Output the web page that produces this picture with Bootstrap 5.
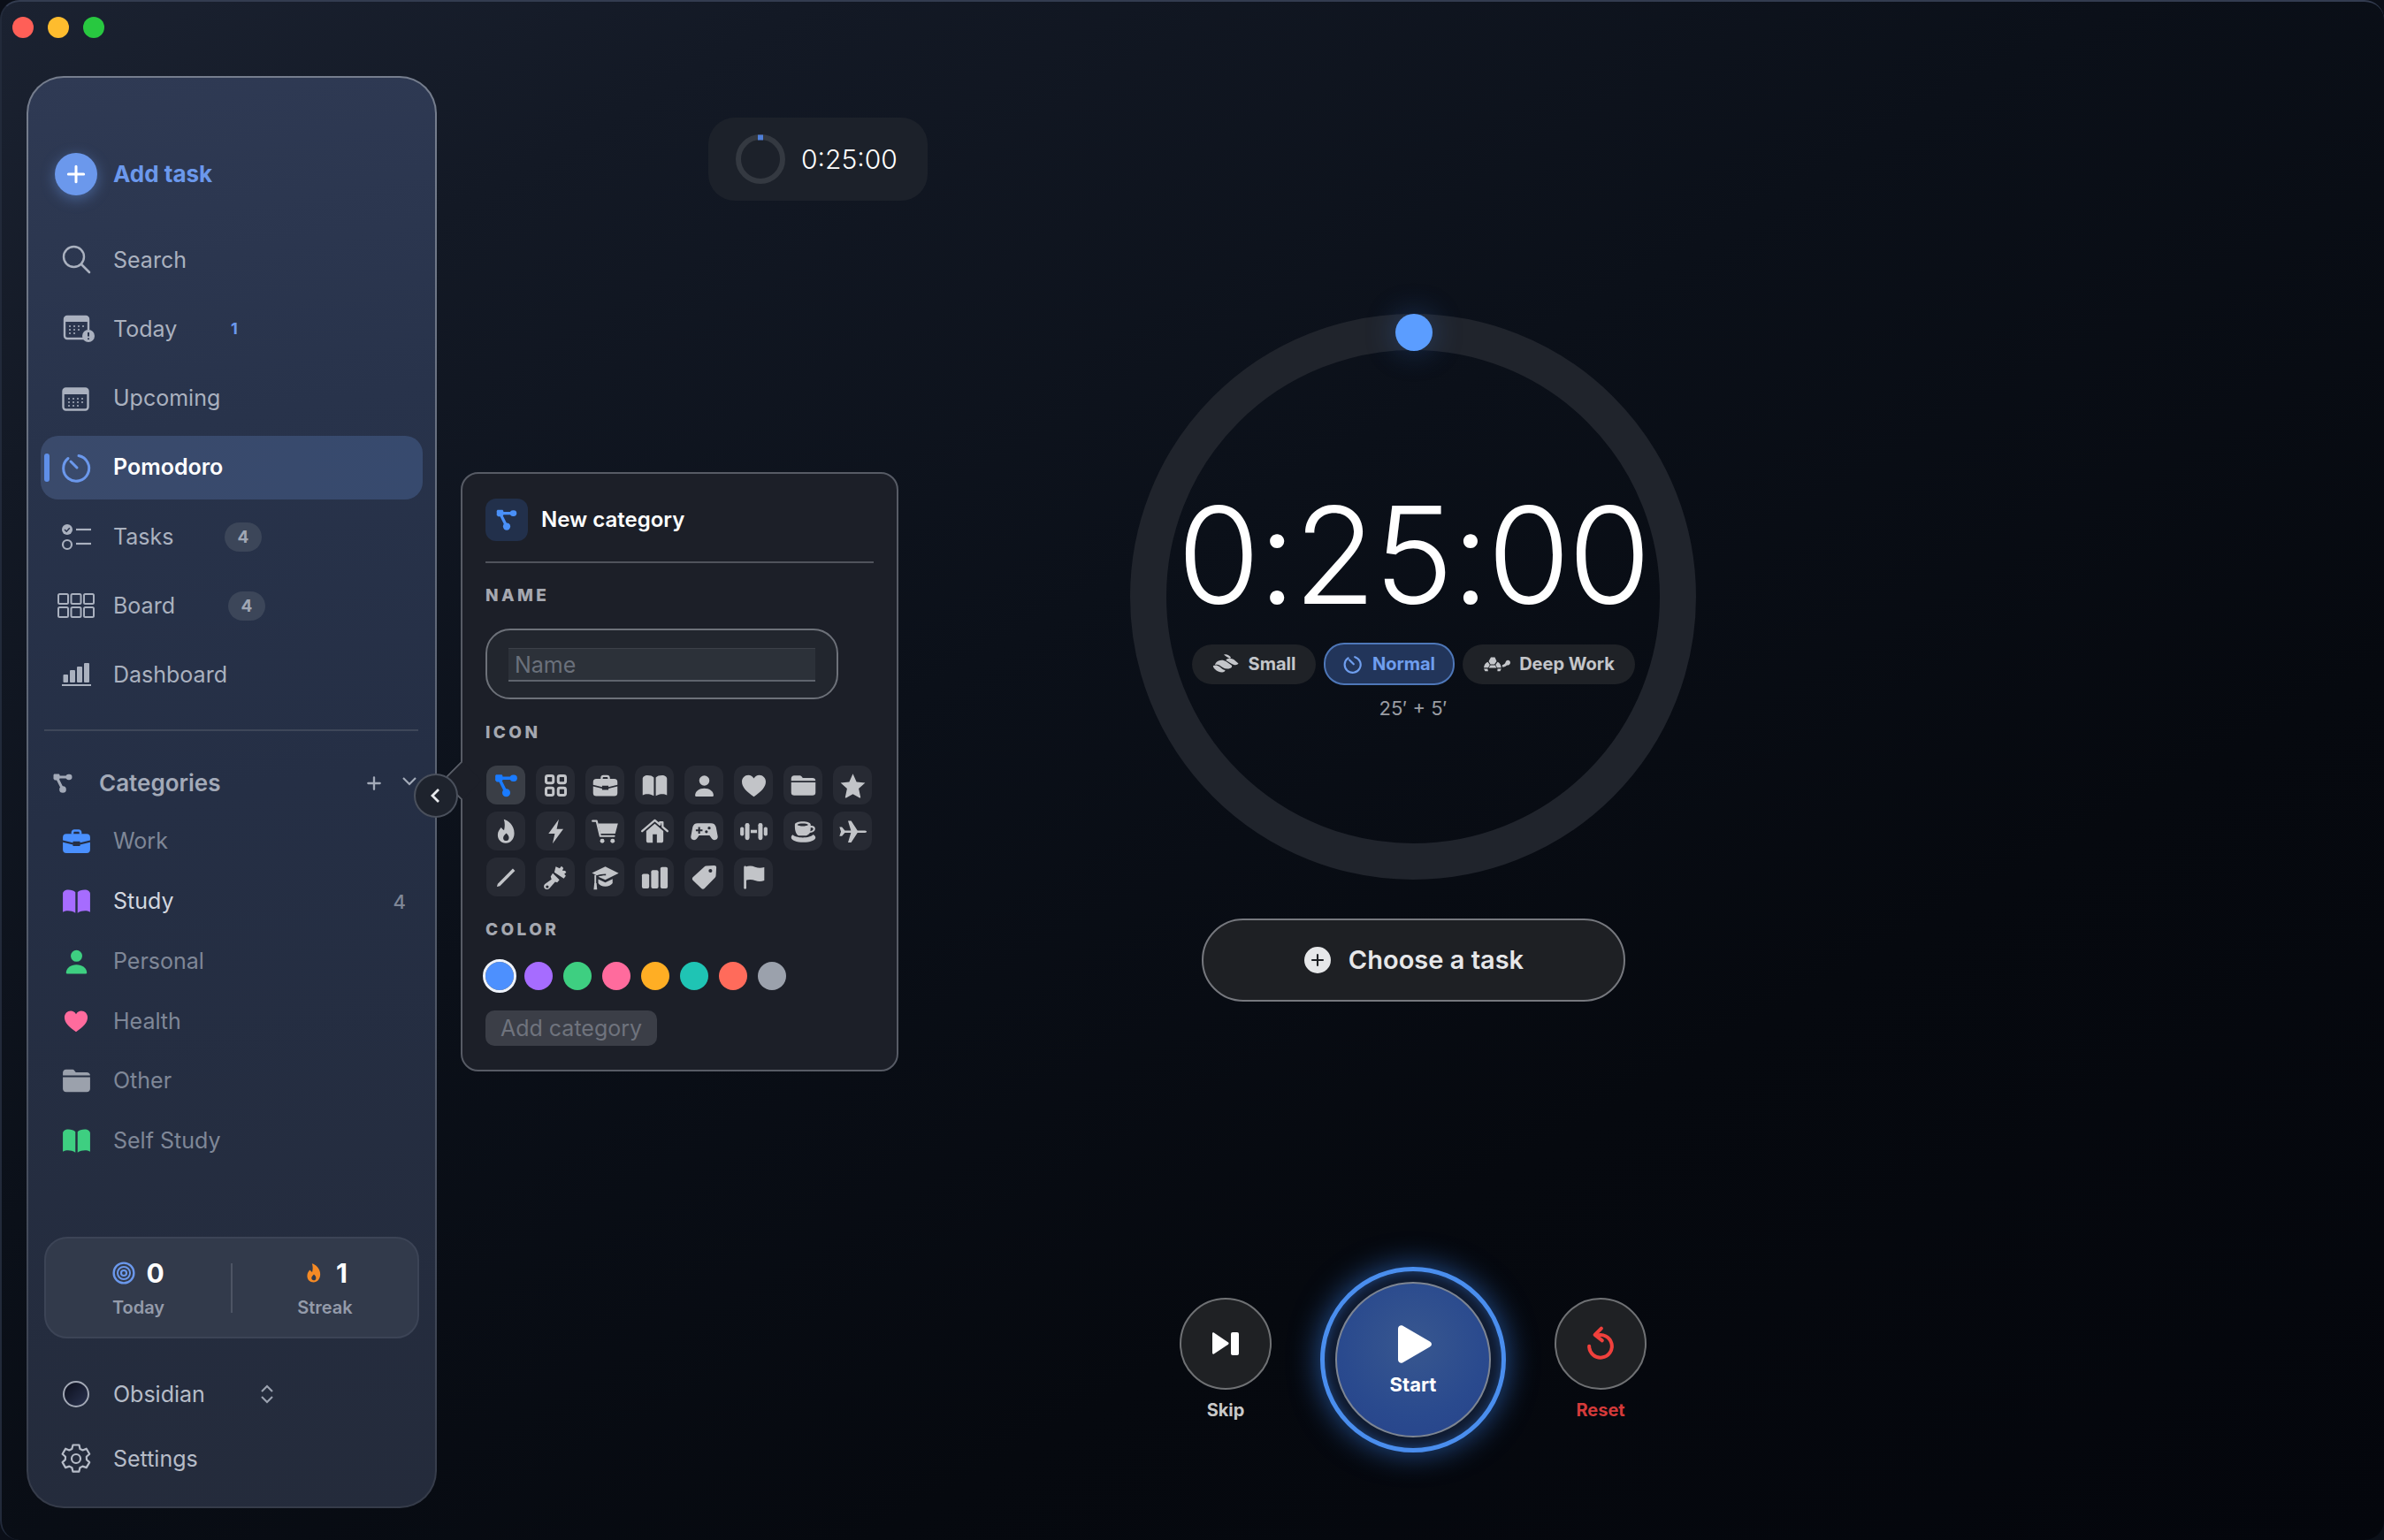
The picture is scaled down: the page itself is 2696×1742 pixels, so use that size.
<!DOCTYPE html>
<html lang="en">
<head>
<meta charset="UTF-8">
<title>Pomodoro</title>
<link href="https://cdn.jsdelivr.net/npm/bootstrap@5.3.3/dist/css/bootstrap.min.css" rel="stylesheet">
<style>
    html, body { margin: 0; background: #0b0f18; }
    body { width: 2696px; height: 1742px; overflow: hidden; font-family: Inter, "Noto Sans", sans-serif; }
    .app-window {
        position: relative; width: 2696px; height: 1742px; border-radius: 22px; overflow: hidden;
        border-top: 2px solid #333c50; border-left: 2px solid #222a3a;
        background: linear-gradient(150deg, #1b2231 0, #131925 16%, #0b1019 42%, #06090f 70%, #04060c 100%);
    }
    .traffic { position: absolute; left: 12px; top: 17px; gap: 16px; }
    .traffic i { width: 24px; height: 24px; border-radius: 50%; display: block; }

    /* sidebar */
    .side-panel {
        width: 464px; height: 1620px; margin: 84px 0 0 28px; flex: none; border-radius: 42px; border: 2px solid transparent;
        background: linear-gradient(170deg, #2f3a54 0, #28334b 25%, #252f45 50%, #242b3b 100%) padding-box,
                    linear-gradient(180deg, #767e8e 0, #5d6574 45%, #444b5a 80%, #353b49 100%) border-box;
        padding: 73px 14px 23px;
    }
    .side-row { height: 72px; border-radius: 20px; padding-left: 16px; gap: 18px; position: relative; color: #aab1bf; font-size: 25px; line-height: 1; }
    .side-row svg { width: 48px; height: 48px; flex: none; }
    .side-row.is-active { background: linear-gradient(90deg, #3a4a6b, #374a6e); color: #fff; font-weight: 600; }
    .side-row.is-active::before { content: ""; position: absolute; left: 4px; top: 20px; width: 6px; height: 32px; border-radius: 3px; background: #5f8fe8; }
    .side-row.is-add { color: #6b98ec; font-weight: 700; font-size: 26px; margin-bottom: 25px; }
    .add-dot { width: 48px; height: 48px; border-radius: 50%; background: #6b98ec; box-shadow: 0 4px 16px rgba(107,152,236,.45); color: #fff; flex: none; }
    .side-row.is-add .add-dot svg { width: 26px; height: 26px; }
    .nav-stack { gap: 6.3px; }
    .today-count { position: absolute; left: 215px; color: #6b98ec; font-weight: 700; font-size: 18px; }
    .pill-count { position: absolute; height: 33px; width: 42px; border-radius: 17px; background: #3c4659; color: #a0a7b5; font-size: 19px; font-weight: 700; }
    .side-rule { height: 2px; background: #3e4759; margin: 25px 5px 0 4px; }
    .cat-head { height: 40px; margin-top: 39px; padding-left: 11px; color: #a3aab8; font-size: 26px; font-weight: 600; position: relative; }
    .cat-head .cat-icon { width: 28px; height: 28px; margin-right: 27px; flex: none; }
    .cat-head .tool { position: absolute; width: 20px; height: 20px; color: #a3aab8; }
    .cat-stack { gap: 5.8px; margin-top: 15px; }
    .cat-row { height: 62px; color: #7f8797; }
    .cat-row.is-live { color: #d3d7df; }
    .cat-row svg { width: 37px; height: 37px; margin: 0 5.5px; }
    .cat-row svg.is-small { width: 32px; height: 32px; margin: 0 8px; }
    .cat-count { position: absolute; right: 19px; color: #7f8797; font-size: 22px; font-weight: 500; }
    .stat-box { height: 115px; margin: 0 4px 32px 4px; border-radius: 26px; background: #323a4b; border: 2px solid #3c4456; }
    .stat-cell { flex: 1 1 0; }
    .stat-num { color: #fff; font-size: 30px; font-weight: 700; line-height: 1; gap: 12px; margin-top: 1px; }
    .stat-num svg { width: 26px; height: 26px; }
    .stat-cap { color: #949baa; font-size: 20px; font-weight: 600; margin-top: 14px; line-height: 1; }
    .stat-line { width: 2px; height: 56px; background: #4d5464; }
    .foot-stack { gap: 11px; }
    .foot-row { height: 62px; color: #b6bcc8; }
    .theme-dot { width: 30px; height: 30px; margin: 0 9px; border-radius: 50%; border: 2px solid #a2a8b5; background: linear-gradient(135deg, #0c0f1c, #2a3350); flex: none; }
    .foot-row .updown { position: absolute; left: 244px; width: 24px; height: 24px; color: #9aa1af; }

    /* collapse handle */
    .collapse-handle { position: absolute; left: 466px; top: 873px; width: 50px; height: 50px; border-radius: 50%; background: #1e232d; border: 2px solid #4a505c; color: #e8eaee; z-index: 5; }
    .collapse-handle svg { width: 24px; height: 24px; }

    /* popover */
    .cat-popover {
        position: absolute; left: 519px; top: 532px; width: 495px; height: 678px; z-index: 4; border-radius: 20px; padding: 28px 26px 0;
        background: #1c1f28; border: 2px solid #575b65;
    }
    .cat-popover::before { content: ""; position: absolute; left: -17px; top: 331px; width: 32px; height: 32px; transform: rotate(45deg); background: #1c1f28; border-left: 2px solid #575b65; border-bottom: 2px solid #575b65; border-radius: 0 0 0 8px; }
    .pop-tile { width: 48px; height: 48px; border-radius: 12px; background: #22304b; color: #4a90f8; flex: none; }
    .pop-tile svg { width: 30px; height: 30px; }
    .pop-title { color: #fff; font-size: 24px; font-weight: 600; margin-left: 15px; }
    .pop-rule { height: 2px; background: #50535c; margin-top: 23px; }
    .pop-label { color: #a5a8b0; font-size: 19px; font-weight: 800; letter-spacing: 3.4px; line-height: 1; height: 20px; }
    .name-wrap { width: 399px; height: 80px; border-radius: 28px; border: 2px solid #6d7179; background: #22262e; padding: 20px 24px; }
    .name-input { display: block; width: 100%; height: 38px; background: #2c3139; border: 0; border-bottom: 2px solid #5f646d; border-top: 1px solid #3c4048; padding: 0 7px; color: #fff; font-size: 25px; border-radius: 0; outline: 0; }
    .name-input::placeholder { color: #6a707b; opacity: 1; }
    .icon-grid { display: grid; grid-template-columns: repeat(8, 44px); grid-auto-rows: 44px; gap: 8px 12px; margin: 0 0 0 1px; }
    .icon-tile { background: #272a33; color: #c2c4c8; border-radius: 12px; }
    .icon-tile svg { width: 33px; height: 33px; }
    .icon-tile.is-picked { background: #3a3e46; color: #1a7bff; }
    .swatch-row { gap: 12px; }
    .swatch { width: 32px; height: 32px; border-radius: 50%; display: block; }
    .swatch.is-picked { outline: 3px solid #eef2fa; outline-offset: 0; }
    .add-cat { height: 40px; width: 194px; padding: 0; border-radius: 10px; background: #3b3e47; color: #6f737d; border: 0; font-size: 25px; line-height: 1; }

    /* main */
    .main-pane { flex: 1 1 0; padding: 131px 0 0 6px; }
    .mini-timer { align-self: flex-start; margin-left: 301px; width: 248px; height: 94px; border-radius: 30px; background: #1c212a; padding-left: 31px; gap: 18px; color: #fff; font-size: 30px; font-weight: 300; }
    .mini-ring { width: 56px; height: 56px; flex: none; }
    .timer-ring { width: 640px; height: 640px; margin-top: 128px; border-radius: 50%; border: 41px solid #20242c; position: relative; padding-top: 156px; flex: none; }
    .ring-handle { position: absolute; width: 42px; height: 42px; border-radius: 50%; background: #5b9dff; top: -41px; left: 259px; box-shadow: 0 0 34px rgba(60,120,220,.35); }
    .big-time { color: #fff; font-size: 152px; font-weight: 300; line-height: 1; letter-spacing: -2.500px; height: 152px; white-space: nowrap; }
    .mode-row { gap: 9px; margin-top: 23px; height: 48px; flex: none; }
    .mode-pill { height: 45px; border-radius: 23px; background: #1f2227; color: #c4c6ca; font-size: 20px; font-weight: 700; gap: 10px; border: 0; padding: 0; }
    .mode-pill svg { width: 32px; height: 24px; }
    .mode-pill.is-on { height: 48px; background: #22355a; color: #6f9eee; border: 2px solid #4e77b8; }
    .mode-pill.is-on svg { width: 24px; height: 24px; }
    .mode-note { color: #9a9da3; font-size: 22px; margin-top: 15px; line-height: 1; }
    .choose-btn { width: 479px; height: 94px; margin-top: 44px; border-radius: 47px; background: #1e2024; border: 2px solid #76787e; color: #e6e7e9; font-size: 29px; font-weight: 600; gap: 20px; padding: 0 0 0 2px; flex: none; }
    .choose-dot { width: 30px; height: 30px; border-radius: 50%; background: #e6e7e9; color: #1e2024; flex: none; }
    .choose-dot svg { width: 18px; height: 18px; }
    .ctrl-row { margin-top: 300px; gap: 55px; }
    .ctrl-col { width: 104px; padding-top: 35px; }
    .ctrl-btn { width: 104px; height: 104px; padding: 0; border-radius: 50%; background: #1f2124; border: 2px solid #6f7174; flex: none; }
    .ctrl-btn svg { width: 44px; height: 44px; }
    .ctrl-cap { font-size: 20px; font-weight: 700; margin-top: 13px; line-height: 1; }
    .start-ring { width: 210px; height: 210px; border-radius: 50%; border: 5px solid #4a8eee; padding: 12px; background: #101b30; box-shadow: 0 0 34px rgba(58,132,240,.6), inset 0 0 12px rgba(58,132,240,.4); }
    .start-btn { width: 100%; height: 100%; padding: 0; border-radius: 50%; border: 2px solid #7d8592; background: radial-gradient(circle at 50% 40%, #38578f 0, #2a4a8e 60%, #26428a 100%); color: #fff; font-size: 22px; font-weight: 700; gap: 13px; line-height: 1; }
    .start-btn svg { width: 38px; height: 43px; margin-left: 3px; }
</style>
</head>
<body>
<svg width="0" height="0" class="position-absolute">
    <defs>
        <symbol id="i-net" viewBox="0 0 24 24"><path d="M6 6H18M6 6L12 18" fill="none" stroke="currentColor" stroke-width="2.600"/><path d="M3 4.200c0-.7.500-1.200 1.200-1.200h3.600c.7 0 1.200.5 1.200 1.200L9 7.800 7.800 9H4.200L3 7.800z" fill="currentColor"/><rect x="15" y="3.300" width="6" height="5.400" rx="2.700" fill="currentColor"/><circle cx="12" cy="18" r="3.300" fill="currentColor"/></symbol>
        <symbol id="i-grid4" viewBox="0 0 24 24"><g fill="none" stroke="currentColor" stroke-width="2.200"><rect x="4" y="4" width="6" height="6" rx="1.400"/><rect x="14" y="4" width="6" height="6" rx="1.400"/><rect x="4" y="14" width="6" height="6" rx="1.400"/><rect x="14" y="14" width="6" height="6" rx="1.400"/></g></symbol>
        <symbol id="i-case" viewBox="0 0 24 24"><path d="M8.200 7V5.600C8.200 4.200 9.200 3.400 10.400 3.400h3.200c1.200 0 2.200.8 2.200 2.200V7h-1.700V5.800c0-.5-.3-.8-.8-.8h-2.600c-.5 0-.8.3-.8.8V7z" fill="currentColor"/><path d="M4.600 6.600h14.800A2.600 2.600 0 0 1 22 9.200v2.200l-7.400 1.800v-1h-5.200v1L2 11.400V9.200a2.600 2.600 0 0 1 2.600-2.600z" fill="currentColor"/><path d="M2 12.800l7.400 1.800v1h5.200v-1l7.400-1.800v5.400a2.600 2.600 0 0 1-2.600 2.600H4.600A2.600 2.600 0 0 1 2 18.200z" fill="currentColor"/></symbol>
        <symbol id="i-book" viewBox="0 0 24 24"><path d="M11.200 5.400v15.200c-1.600-1.200-3.600-1.600-5.400-1.600-1.400 0-2.500.3-3.800 1V6.400C2 5 3.600 3.600 6 3.600c2.200 0 4.200.6 5.200 1.800z" fill="currentColor"/><path d="M12.800 5.400v15.200c1.600-1.200 3.600-1.600 5.400-1.600 1.400 0 2.500.3 3.800 1V6.400C22 5 20.400 3.600 18 3.600c-2.200 0-4.200.6-5.200 1.800z" fill="currentColor"/></symbol>
        <symbol id="i-person" viewBox="0 0 24 24"><circle cx="12" cy="8" r="4.200" fill="currentColor"/><path d="M4.400 20.400c0-3.600 3.400-6 7.600-6s7.600 2.400 7.600 6c0 .4-.3.6-.7.6H5.100c-.4 0-.7-.2-.7-.6z" fill="currentColor"/></symbol>
        <symbol id="i-heart" viewBox="0 0 24 24"><path d="M12 21.200C5.600 16.800 2.200 13.200 2.200 8.900 2.200 5.800 4.600 3.400 7.500 3.400c1.900 0 3.500 1 4.500 2.700 1-1.700 2.600-2.700 4.500-2.700 2.900 0 5.300 2.400 5.300 5.500 0 4.300-3.400 7.900-9.800 12.300z" fill="currentColor"/></symbol>
        <symbol id="i-folder" viewBox="0 0 24 24"><path d="M2 6.200C2 4.800 3 3.800 4.400 3.800h4.200c.9 0 1.500.3 2.100 1l.8 1H19.500c1.500 0 2.500.9 2.500 2.300H2z" fill="currentColor"/><path d="M2 9.400h20v8.400c0 1.500-1 2.400-2.500 2.400h-15C3 20.200 2 19.300 2 17.800z" fill="currentColor"/></symbol>
        <symbol id="i-star" viewBox="0 0 24 24"><path d="M12 2.400l3 6.600 7.100.8-5.300 4.800 1.500 7c.1.500-.4.800-.8.600L12 19l-5.500 3.200c-.4.200-.9-.1-.8-.6l1.500-7-5.300-4.800L9 9z" fill="currentColor"/></symbol>
        <symbol id="i-flame" viewBox="0 0 24 24"><path fill-rule="evenodd" d="M10 2c3.800 1 8.600 5 8.600 11.400 0 4.800-3 8.200-7 8.200-3.800 0-6.600-2.800-6.600-6.700 0-2.700 1.400-4.500 2.800-6.100.9 1.100 1.500 1.800 2.400 2.300C11 8 11 5 10 2zm2 11.400c-1.600 1.500-2.500 2.700-2.500 4 0 1.300 1 2.300 2.300 2.300 1.400 0 2.400-1 2.400-2.500 0-1.300-.8-2.700-2.200-3.800z" fill="currentColor"/></symbol>
        <symbol id="i-bolt" viewBox="0 0 24 24"><path d="M14.500 2L6 13.800h5.200L9.400 22l8.800-12h-5.400z" fill="currentColor"/></symbol>
        <symbol id="i-cart" viewBox="0 0 24 24"><path d="M1.600 3.400h3.300l3 12.400h11.400" fill="none" stroke="currentColor" stroke-width="1.600" stroke-linejoin="round" stroke-linecap="round"/><path d="M6 5.400h16.400l-2.200 8.400H8z" fill="currentColor"/><circle cx="9.500" cy="19.800" r="1.800" fill="currentColor"/><circle cx="18" cy="19.800" r="1.800" fill="currentColor"/></symbol>
        <symbol id="i-house" viewBox="0 0 24 24"><path fill-rule="evenodd" d="M5 11.600L12 5.600l7 6v8c0 1-.7 1.700-1.600 1.700H6.600C5.700 21.300 5 20.600 5 19.600zM10.300 14.400v6.900h3.400v-6.900z" fill="currentColor"/><path d="M1.600 11.800L12 2.800l4.200 3.600V4.400h2.200v3.800l4 3.600" fill="none" stroke="currentColor" stroke-width="1.700" stroke-linecap="round" stroke-linejoin="round"/></symbol>
        <symbol id="i-game" viewBox="0 0 24 24"><path fill-rule="evenodd" d="M6.500 5.200h11c2.200 0 3.500 1.100 4.100 3.200l1.400 7.400c.4 2-1 3.200-2.600 3.200-1.200 0-2-.7-2.700-1.700l-1.400-2H7.700l-1.400 2c-.7 1-1.500 1.700-2.700 1.700C2 19 .6 17.800 1 15.800l1.400-7.400C3 6.300 4.300 5.200 6.500 5.200zM7 8.400v2H5v1.500h2v2h1.500v-2h2v-1.500h-2v-2zM16 8a1.200 1.200 0 1 0 0 2.400A1.200 1.200 0 0 0 16 8zm-2.300 3a1.200 1.200 0 1 0 0 2.400 1.200 1.200 0 0 0 0-2.400z" fill="currentColor"/></symbol>
        <symbol id="i-bell" viewBox="0 0 24 24"><rect x=".8" y="8.400" width="3" height="7.200" rx="1.400" fill="currentColor"/><rect x="4.800" y="5" width="3.600" height="14" rx="1.700" fill="currentColor"/><rect x="9.400" y="10.700" width="5.200" height="2.600" fill="currentColor"/><rect x="15.600" y="5" width="3.600" height="14" rx="1.700" fill="currentColor"/><rect x="20.200" y="8.400" width="3" height="7.200" rx="1.400" fill="currentColor"/></symbol>
        <symbol id="i-cup" viewBox="0 0 24 24"><path fill-rule="evenodd" d="M5 6.300c0-1.500 3-2.500 6.500-2.500s6.500 1 6.500 2.500v1c2.300-.3 3.700.8 3.700 2.500 0 1.900-1.600 3-4.300 3.300-.8 1.200-2 2-3 2.300H8C6 14.600 5 11 5 8zM7 6.500c.8.700 2.500 1.100 4.500 1.100s3.700-.4 4.500-1.100c-.8-.7-2.500-1-4.500-1S7.800 5.800 7 6.500zm11 2.400c0 1.100-.1 2.100-.3 2.900 1.600-.2 2.400-.9 2.400-1.900 0-.8-.8-1.200-2.100-1z" fill="currentColor"/><path d="M3.200 14.800c1 1.200 4.600 2.300 8.300 2.300s7.300-1 8.600-2.500c1.100.6 1.900 1.500 1.900 2.400 0 2.200-4.500 3.900-10 3.900S2 19.200 2 17c0-.9.400-1.600 1.200-2.200z" fill="currentColor"/></symbol>
        <symbol id="i-plane" viewBox="0 0 24 24"><path d="M1 8.400h2l2.400 2.800h5L8 3.200h2.600l5.200 8h5c1.500 0 2.600.4 2.600.9s-1.100.9-2.600.9h-5l-5.200 8H8l2.400-8h-5L3 15.800H1l1.200-3.700z" fill="currentColor"/></symbol>
        <symbol id="i-pencil" viewBox="0 0 24 24"><path d="M17.400 4.800l1.800 1.800L6.800 19l-2.500.7.700-2.500z" fill="currentColor"/></symbol>
        <symbol id="i-brush" viewBox="0 0 24 24"><path d="M12 3l3.200 1.500 1.500-1.800 1.600 1.600-.9 2.100 2.300.1.900 1.300-1.600 1.400 1.300 1.500-1.700 2.200-7.800-5z" fill="currentColor"/><path fill-rule="evenodd" d="M9.500 8.500l5.500 5.500-1.800 2.200-1.700-.6-4.600 5.300c-1.300 1.300-3.500 1.100-4.300-.2-.8-1.300-.2-3 1.200-3.800l4.700-3.300-.7-2.400zM5 18.500a1.200 1.200 0 1 0 0 2.400 1.200 1.200 0 0 0 0-2.400z" fill="currentColor"/></symbol>
        <symbol id="i-cap" viewBox="0 0 24 24"><path d="M12 3L1 8.400l4 2c2.200-.9 4.600-1.400 7.500-1.400v1.300c-2.800 0-4.900.4-6.300 1.100L12 14l11-5.500z" fill="currentColor"/><path d="M6.200 13.400l5.800 2.700 6-2.900v3.500c-1.200 1.700-3.400 2.800-6 2.800s-4.800-1.100-5.800-2.800z" fill="currentColor"/><path d="M3.800 10v7" stroke="currentColor" stroke-width="1.400"/><path d="M3 16.800h1.800l.5 5.200h-2.800z" fill="currentColor"/></symbol>
        <symbol id="i-bars" viewBox="0 0 24 24"><rect x="1.400" y="9" width="6" height="12" rx="1.400" fill="currentColor"/><rect x="9" y="6" width="6" height="15" rx="1.400" fill="currentColor"/><rect x="16.600" y="3.400" width="6" height="17.600" rx="1.400" fill="currentColor"/></symbol>
        <symbol id="i-tag" viewBox="0 0 24 24"><path fill-rule="evenodd" d="M13.500 2.600l6.700-.4c1 0 1.700.6 1.700 1.700l-.4 6.700c0 .6-.3 1.100-.7 1.500l-8.700 9c-.7.700-1.800.7-2.500 0l-7-6.800c-.7-.7-.7-1.800 0-2.500L12 3.300c.4-.4 1-.7 1.500-.7zM17 5a1.500 1.500 0 1 0 0 3 1.500 1.500 0 0 0 0-3z" fill="currentColor"/></symbol>
        <symbol id="i-flag" viewBox="0 0 24 24"><rect x="3.800" y="2.600" width="2" height="19" rx="1" fill="currentColor"/><path d="M5 3.400c2.800-1.300 5.600-1 8 0 2.600 1 5 1 7.600.2v11c-2.600 1-5 1-7.600 0-2.400-1-5.200-1.200-8 0z" fill="currentColor"/></symbol>
        <symbol id="i-plus" viewBox="0 0 24 24"><path d="M12 4v16M4 12h16" fill="none" stroke="currentColor" stroke-width="2.800" stroke-linecap="round"/></symbol>
        <symbol id="i-clock" viewBox="0 0 24 24"><path d="M14.200 4.200A9 9 0 1 1 6.600 5.400" fill="none" stroke="currentColor" stroke-width="2.200" stroke-linecap="round"/><path d="M8 7.500l4.800 4.800" fill="none" stroke="currentColor" stroke-width="2.200" stroke-linecap="round"/></symbol>
        <symbol id="i-rabbit" viewBox="0 0 32 24"><path d="M14 1.500c3-1 6 .3 8 3l-1 1.500c-2.500-1.500-5-2.500-7-4.500z" fill="currentColor"/><path d="M19 6c3-.5 6 .5 8 2.500l3.500 3c-1 1.500-3 2-5 1.500-2-.5-3-1.500-5-2.500l-4-2.500c0-1 1-2 2.500-2z" fill="currentColor"/><path d="M8 8.500c3-1.500 6-1 9 1l5 3.500c1 .8 1.500 1.500 1 2.500-1 1.500-3 2-5 2-4 0-6-2-9-4-1.500-1-3-1-5-.5C4.500 10.500 6 9.500 8 8.500z" fill="currentColor"/><path d="M2 14c2.500-1 5-.5 7 1l3 2.500c1 .8 2 1.200 3.500 1.500 0 1.500-1.500 2.500-3.500 2.500-3 0-6-1.500-8-3.500C2.500 16.500 1.500 15 2 14z" fill="currentColor"/></symbol>
        <symbol id="i-turtle" viewBox="0 0 32 24"><path d="M10 4.500h4.500l2 4.500-2.500 3.500h-4.500L7.500 9zM6.500 9.800l2.300 3.200-1.800 3.200H2C2.300 13.400 3.800 11 6.500 9.800zM17.600 9.800l-2.300 3.200 1.800 3.200h4.600c-.3-2.900-1.700-5.200-4.100-6.400zM9.500 13.500h5.200l1.800 3H7.600zM2 17.500h4.300l.6 2.800H3.500zM17.500 17.500h4.300l-1.400 2.800h-3z" fill="currentColor"/><path fill-rule="evenodd" d="M22.700 13.400c1.300-.2 2.500-.9 3.500-2.300.5-2.300 1.700-3.400 3-3.400 1.600 0 2.800 1.200 2.800 2.800 0 2-1.500 3.100-3.800 3.100-1.700 1.700-3.600 2.200-5.200 1.800z" fill="currentColor"/></symbol>
        <symbol id="i-reset" viewBox="0 0 24 24"><path d="M9.500 7A7 7 0 1 1 5 13.500" fill="none" stroke="currentColor" stroke-width="2.200" stroke-linecap="round"/><path d="M12.500 2.500L8.500 6.500 13 10" fill="none" stroke="currentColor" stroke-width="2.200" stroke-linecap="round" stroke-linejoin="round"/></symbol>
    </defs>
</svg>

<div class="app-window d-flex">
    <div class="traffic d-flex">
        <i style="background:#ff5f57"></i><i style="background:#febc2e"></i><i style="background:#28c840"></i>
    </div>

    <!-- sidebar -->
    <aside class="side-panel d-flex flex-column">
        <div class="side-row is-add d-flex align-items-center">
            <span class="add-dot d-flex align-items-center justify-content-center"><svg><use href="#i-plus"/></svg></span>Add task
        </div>
        <div class="nav-stack d-flex flex-column">
            <div class="side-row d-flex align-items-center">
                <svg viewBox="0 0 48 48"><circle cx="21.500" cy="20.500" r="11.500" fill="none" stroke="currentColor" stroke-width="2.400"/><path d="M30 29l9 9" stroke="currentColor" stroke-width="2.600" stroke-linecap="round"/></svg>Search
            </div>
            <div class="side-row d-flex align-items-center">
                <svg viewBox="0 0 48 48"><rect x="11" y="10" width="27" height="25" rx="3" fill="none" stroke="currentColor" stroke-width="2.400"/><path d="M11 10h27v6H11z" fill="currentColor"/><path d="M16 21h2m3 0h2m3 0h2m3 0h2M16 25h2m3 0h2m3 0h2M16 29h2m3 0h2" stroke="currentColor" stroke-width="1.600"/><circle cx="38" cy="32" r="7" fill="currentColor"/><path d="M38 28v4.500M38 34.500v1.500" stroke="#28324a" stroke-width="2"/></svg>Today<span class="today-count">1</span>
            </div>
            <div class="side-row d-flex align-items-center">
                <svg viewBox="0 0 48 48"><rect x="9.500" y="12.500" width="28" height="24" rx="3" fill="none" stroke="currentColor" stroke-width="2.400"/><path d="M10 13h27v6H10z" fill="currentColor"/><path d="M15 24h2m3 0h2m3 0h2m3 0h2M15 28h2m3 0h2m3 0h2m3 0h2M15 32h2m3 0h2m3 0h2" stroke="currentColor" stroke-width="1.600"/></svg>Upcoming
            </div>
            <div class="side-row is-active d-flex align-items-center">
                <svg viewBox="0 0 48 48" style="color:#6b98ec"><path d="M27 10.500A14.500 14.500 0 1 1 15 13.500" fill="none" stroke="currentColor" stroke-width="3" stroke-linecap="round"/><path d="M18 17l7 7" stroke="currentColor" stroke-width="3" stroke-linecap="round"/></svg>Pomodoro
            </div>
            <div class="side-row d-flex align-items-center">
                <svg viewBox="0 0 48 48"><circle cx="14" cy="16" r="6" fill="currentColor"/><path d="M11 16l2.200 2.200 3.600-4" stroke="#28324a" stroke-width="1.600" fill="none"/><path d="M24 16h17" stroke="currentColor" stroke-width="2.200"/><circle cx="14" cy="33" r="5" fill="none" stroke="currentColor" stroke-width="2.200"/><path d="M24 32h17" stroke="currentColor" stroke-width="2.200"/></svg>Tasks<span class="pill-count d-flex align-items-center justify-content-center" style="left:208px">4</span>
            </div>
            <div class="side-row d-flex align-items-center">
                <svg viewBox="0 0 48 48"><g fill="none" stroke="currentColor" stroke-width="2"><rect x="4" y="11" width="11" height="11" rx="1.500"/><rect x="18.500" y="11" width="11" height="11" rx="1.500"/><rect x="33" y="11" width="11" height="11" rx="1.500"/><rect x="4" y="26" width="11" height="11" rx="1.500"/><rect x="18.500" y="26" width="11" height="11" rx="1.500"/><rect x="33" y="26" width="11" height="11" rx="1.500"/></g></svg>Board<span class="pill-count d-flex align-items-center justify-content-center" style="left:212px">4</span>
            </div>
            <div class="side-row d-flex align-items-center">
                <svg viewBox="0 0 48 48"><rect x="9.500" y="23" width="5.500" height="9" rx="1" fill="currentColor"/><rect x="17" y="18" width="6" height="14" rx="1" fill="currentColor"/><rect x="25" y="14" width="6" height="18" rx="1" fill="currentColor"/><rect x="33" y="10" width="6" height="22" rx="1" fill="currentColor"/><path d="M8 35h33" stroke="currentColor" stroke-width="2"/></svg>Dashboard
            </div>
        </div>

        <div class="side-rule"></div>

        <div class="cat-head d-flex align-items-center">
            <svg class="cat-icon"><use href="#i-net"/></svg>Categories
            <svg class="tool" style="left:367px;top:10px"><use href="#i-plus"/></svg>
            <svg class="tool" viewBox="0 0 20 20" style="left:407px;top:8px"><path d="M3 6l7 7 7-7" fill="none" stroke="currentColor" stroke-width="2.200"/></svg>
        </div>

        <div class="cat-stack d-flex flex-column">
            <div class="side-row cat-row d-flex align-items-center"><svg style="color:#4a90fe"><use href="#i-case"/></svg>Work</div>
            <div class="side-row cat-row is-live d-flex align-items-center"><svg style="color:#a66cff"><use href="#i-book"/></svg>Study<span class="cat-count">4</span></div>
            <div class="side-row cat-row d-flex align-items-center"><svg style="color:#3ecf81"><use href="#i-person"/></svg>Personal</div>
            <div class="side-row cat-row d-flex align-items-center"><svg class="is-small" style="color:#ff6b9d"><use href="#i-heart"/></svg>Health</div>
            <div class="side-row cat-row d-flex align-items-center"><svg style="color:#9ba1ac"><use href="#i-folder"/></svg>Other</div>
            <div class="side-row cat-row d-flex align-items-center"><svg style="color:#3ecf81"><use href="#i-book"/></svg>Self Study</div>
        </div>

        <div class="mt-auto">
            <div class="stat-box d-flex align-items-center">
                <div class="stat-cell d-flex flex-column align-items-center">
                    <div class="stat-num d-flex align-items-center"><svg viewBox="0 0 24 24"><g fill="none" stroke="#6b98ec"><circle cx="12" cy="12" r="10.500" stroke-width="2.200"/><circle cx="12" cy="12" r="6.500" stroke-width="1.800"/><circle cx="12" cy="12" r="2.800" stroke-width="2"/></g></svg>0</div>
                    <div class="stat-cap">Today</div>
                </div>
                <div class="stat-line"></div>
                <div class="stat-cell d-flex flex-column align-items-center">
                    <div class="stat-num d-flex align-items-center"><svg style="color:#f58a25"><use href="#i-flame"/></svg>1</div>
                    <div class="stat-cap">Streak</div>
                </div>
            </div>
            <div class="foot-stack d-flex flex-column">
                <div class="side-row foot-row d-flex align-items-center"><span class="theme-dot"></span>Obsidian
                    <svg class="updown" viewBox="0 0 24 24"><path d="M6 9l6-6 6 6M6 15l6 6 6-6" fill="none" stroke="currentColor" stroke-width="2.200"/></svg></div>
                <div class="side-row foot-row d-flex align-items-center">
                    <svg viewBox="0 0 48 48"><path d="M20.500 8.500h7l1 4.500 3 1.500 4.200-1.800 3.500 6-3.400 3 .2 3.400 3.200 3-3.500 6-4.300-1.500-3 1.600-1 4.400h-7l-1-4.400-3-1.600-4.300 1.500-3.500-6 3.200-3 .2-3.400-3.400-3 3.500-6 4.200 1.800 3-1.500z" fill="none" stroke="currentColor" stroke-width="2.200" stroke-linejoin="round"/><circle cx="24" cy="24" r="5" fill="none" stroke="currentColor" stroke-width="2.200"/></svg>Settings
                </div>
            </div>
        </div>
    </aside>

    <div class="collapse-handle d-flex align-items-center justify-content-center">
        <svg viewBox="0 0 24 24"><path d="M15 5l-7 7 7 7" fill="none" stroke="currentColor" stroke-width="2.800"/></svg>
    </div>

    <!-- new category popover -->
    <div class="cat-popover d-flex flex-column">
        <div class="d-flex align-items-center">
            <span class="pop-tile d-flex align-items-center justify-content-center"><svg><use href="#i-net"/></svg></span>
            <span class="pop-title">New category</span>
        </div>
        <div class="pop-rule"></div>
        <div class="pop-label" style="margin-top:27px">NAME</div>
        <div class="name-wrap" style="margin-top:27px"><input class="name-input" type="text" placeholder="Name"></div>
        <div class="pop-label" style="margin-top:28px">ICON</div>
        <div class="icon-grid" style="margin-top:27px">
            <span class="icon-tile is-picked d-flex align-items-center justify-content-center"><svg><use href="#i-net"/></svg></span>
            <span class="icon-tile d-flex align-items-center justify-content-center"><svg><use href="#i-grid4"/></svg></span>
            <span class="icon-tile d-flex align-items-center justify-content-center"><svg><use href="#i-case"/></svg></span>
            <span class="icon-tile d-flex align-items-center justify-content-center"><svg><use href="#i-book"/></svg></span>
            <span class="icon-tile d-flex align-items-center justify-content-center"><svg><use href="#i-person"/></svg></span>
            <span class="icon-tile d-flex align-items-center justify-content-center"><svg><use href="#i-heart"/></svg></span>
            <span class="icon-tile d-flex align-items-center justify-content-center"><svg><use href="#i-folder"/></svg></span>
            <span class="icon-tile d-flex align-items-center justify-content-center"><svg><use href="#i-star"/></svg></span>
            <span class="icon-tile d-flex align-items-center justify-content-center"><svg><use href="#i-flame"/></svg></span>
            <span class="icon-tile d-flex align-items-center justify-content-center"><svg><use href="#i-bolt"/></svg></span>
            <span class="icon-tile d-flex align-items-center justify-content-center"><svg><use href="#i-cart"/></svg></span>
            <span class="icon-tile d-flex align-items-center justify-content-center"><svg><use href="#i-house"/></svg></span>
            <span class="icon-tile d-flex align-items-center justify-content-center"><svg><use href="#i-game"/></svg></span>
            <span class="icon-tile d-flex align-items-center justify-content-center"><svg><use href="#i-bell"/></svg></span>
            <span class="icon-tile d-flex align-items-center justify-content-center"><svg><use href="#i-cup"/></svg></span>
            <span class="icon-tile d-flex align-items-center justify-content-center"><svg><use href="#i-plane"/></svg></span>
            <span class="icon-tile d-flex align-items-center justify-content-center"><svg><use href="#i-pencil"/></svg></span>
            <span class="icon-tile d-flex align-items-center justify-content-center"><svg><use href="#i-brush"/></svg></span>
            <span class="icon-tile d-flex align-items-center justify-content-center"><svg><use href="#i-cap"/></svg></span>
            <span class="icon-tile d-flex align-items-center justify-content-center"><svg><use href="#i-bars"/></svg></span>
            <span class="icon-tile d-flex align-items-center justify-content-center"><svg><use href="#i-tag"/></svg></span>
            <span class="icon-tile d-flex align-items-center justify-content-center"><svg><use href="#i-flag"/></svg></span>
        </div>
        <div class="pop-label" style="margin-top:28px">COLOR</div>
        <div class="swatch-row d-flex" style="margin-top:26px;margin-left:0">
            <i class="swatch is-picked" style="background:#4d90fe"></i>
            <i class="swatch" style="background:#a66cff"></i>
            <i class="swatch" style="background:#3ecf81"></i>
            <i class="swatch" style="background:#ff6b9d"></i>
            <i class="swatch" style="background:#ffae24"></i>
            <i class="swatch" style="background:#1fc4b4"></i>
            <i class="swatch" style="background:#ff6b5b"></i>
            <i class="swatch" style="background:#9ba1ac"></i>
        </div>
        <button class="btn add-cat" style="margin-top:23px" type="button">Add category</button>
    </div>

    <!-- timer -->
    <main class="main-pane d-flex flex-column align-items-center">
        <div class="mini-timer d-flex align-items-center">
            <svg class="mini-ring" viewBox="0 0 56 56"><circle cx="28" cy="28" r="25" fill="none" stroke="#343941" stroke-width="6"/><path d="M28 0.500v6" stroke="#4f7fd8" stroke-width="6" fill="none"/></svg>
            0:25:00
        </div>
        <div class="timer-ring d-flex flex-column align-items-center">
            <span class="ring-handle"></span>
            <div class="big-time">0:25:00</div>
            <div class="mode-row d-flex align-items-center justify-content-center">
                <button class="btn mode-pill d-flex align-items-center justify-content-center" style="width:140px" type="button"><svg viewBox="0 0 32 24"><use href="#i-rabbit"/></svg>Small</button>
                <button class="btn mode-pill is-on d-flex align-items-center justify-content-center" style="width:148px" type="button"><svg><use href="#i-clock"/></svg>Normal</button>
                <button class="btn mode-pill d-flex align-items-center justify-content-center" style="width:195px" type="button"><svg viewBox="0 0 32 24"><use href="#i-turtle"/></svg>Deep Work</button>
            </div>
            <div class="mode-note">25′ + 5′</div>
        </div>
        <button class="btn choose-btn d-flex align-items-center justify-content-center" type="button">
            <span class="choose-dot d-flex align-items-center justify-content-center"><svg><use href="#i-plus"/></svg></span>Choose a task
        </button>
        <div class="ctrl-row d-flex align-items-start">
            <div class="ctrl-col d-flex flex-column align-items-center">
                <button class="btn ctrl-btn d-flex align-items-center justify-content-center" type="button">
                    <svg viewBox="0 0 44 44" style="color:#fff"><path d="M7 10.500c0-1 1-1.500 1.800-1L25 20.500c.8.600.8 1.600 0 2.200L8.800 33.500c-.8.500-1.800 0-1.800-1z" fill="currentColor"/><rect x="28" y="9" width="9" height="26" rx="2" fill="currentColor"/></svg>
                </button>
                <div class="ctrl-cap" style="color:#c8c8c8">Skip</div>
            </div>
            <div class="start-ring">
                <button class="btn start-btn d-flex flex-column align-items-center justify-content-center" type="button">
                    <svg viewBox="0 0 38 43"><path d="M0 4C0 1 3 -.7 5.500 .7L36 18.500c2.600 1.500 2.600 4.500 0 6L5.500 42.300C3 43.700 0 42 0 39z" fill="currentColor"/></svg>
                    Start
                </button>
            </div>
            <div class="ctrl-col d-flex flex-column align-items-center">
                <button class="btn ctrl-btn d-flex align-items-center justify-content-center" type="button">
                    <svg style="color:#f0403c"><use href="#i-reset"/></svg>
                </button>
                <div class="ctrl-cap" style="color:#d43a3a">Reset</div>
            </div>
        </div>
    </main>
</div>

<script src="https://cdn.jsdelivr.net/npm/bootstrap@5.3.3/dist/js/bootstrap.bundle.min.js"></script>
</body>
</html>
